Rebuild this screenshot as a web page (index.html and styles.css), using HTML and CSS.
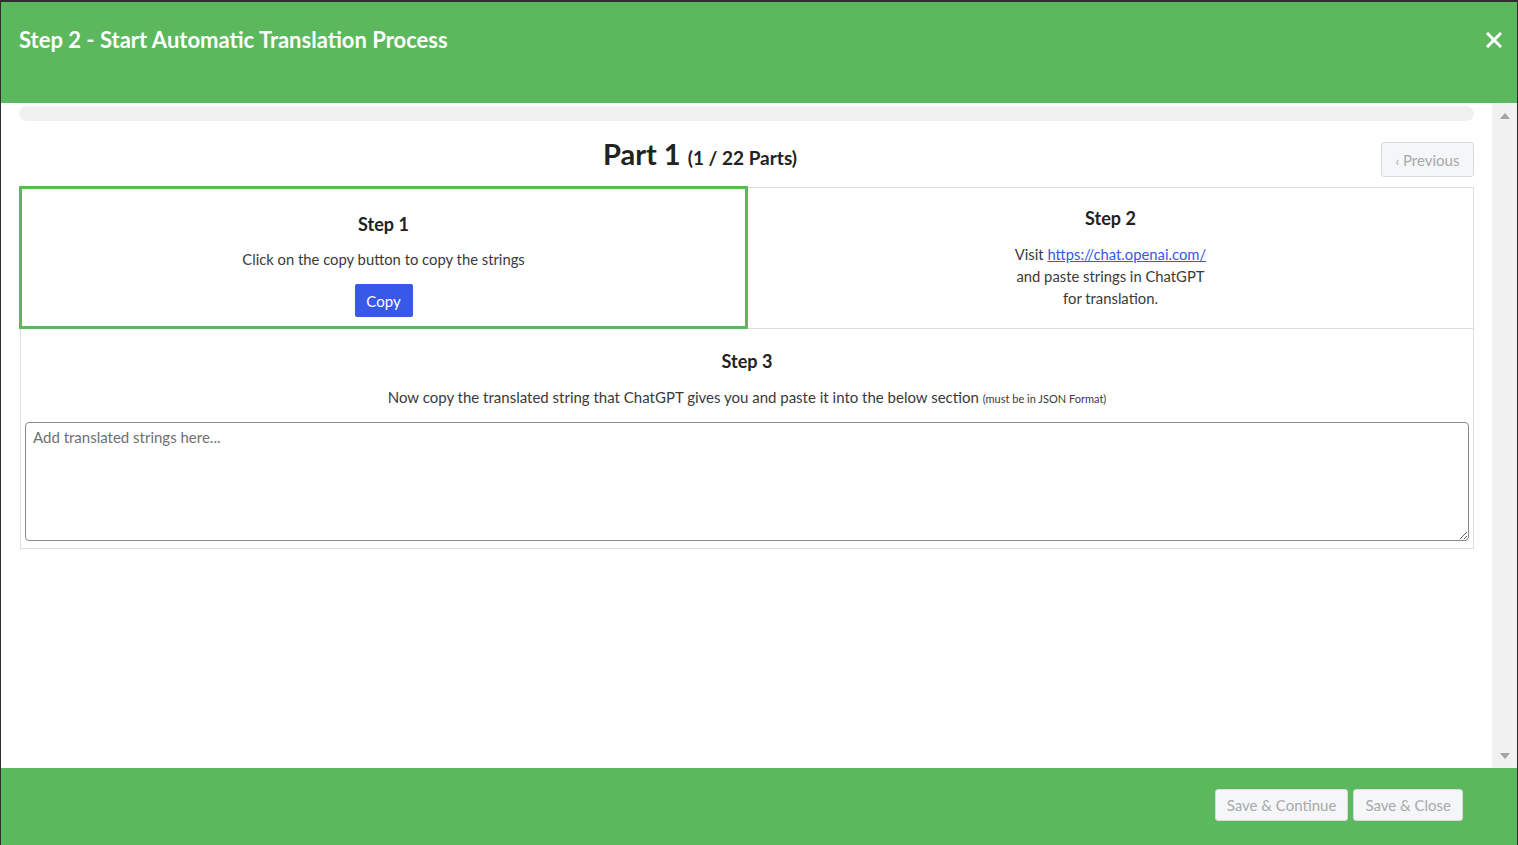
FILE: index.html
```html
<!DOCTYPE html>
<html>
<head>
<meta charset="utf-8">
<link rel="stylesheet" href="styles.css">
</head>
<body>
<div class="modal">
  <header class="modal-header">
    <h1 class="modal-title">Step 2 - Start Automatic Translation Process</h1>
    <button class="close" aria-label="Close">
      <svg width="16" height="16" viewBox="0 0 16 16"><path d="M2 2 L14 14 M14 2 L2 14" stroke="#fff" stroke-width="3" stroke-linecap="square"/></svg>
    </button>
  </header>
  <div class="modal-body">
    <div class="content">
      <div class="progress"></div>
      <div class="part-row">
        <h2 class="part-title">Part 1 <small>(1 / 22 Parts)</small></h2>
        <button class="btn-light prev"><span class="chev">&lsaquo;</span> Previous</button>
      </div>
      <div class="steps">
        <div class="steps-top">
          <div class="step step1">
            <h3 class="step-title">Step 1</h3>
            <p class="step-text">Click on the copy button to copy the strings</p>
            <button class="btn-copy">Copy</button>
          </div>
          <div class="step step2">
            <h3 class="step-title">Step 2</h3>
            <p class="step-text lines">Visit <a href="#">https://chat.openai.com/</a><br>and paste strings in ChatGPT<br>for translation.</p>
          </div>
        </div>
        <div class="step step3">
          <h3 class="step-title">Step 3</h3>
          <p class="step-text">Now copy the translated string that ChatGPT gives you and paste it into the below section <small>(must be in JSON Format)</small></p>
          <textarea class="strings" placeholder="Add translated strings here..."></textarea>
        </div>
      </div>
    </div>
    <div class="scrollbar">
      <span class="arrow up"></span>
      <span class="arrow down"></span>
    </div>
  </div>
  <footer class="modal-footer">
    <button class="btn-light">Save &amp; Continue</button>
    <button class="btn-light">Save &amp; Close</button>
  </footer>
</div>
</body>
</html>
```

FILE: styles.css
```css
html, body {
  margin: 0;
  padding: 0;
  height: 100%;
}
body {
  background: #2e2e2e;
  font-family: Lato, "Noto Sans", "Liberation Sans", sans-serif;
  color: #3a3a3a;
  overflow: hidden;
}
.modal {
  margin: 2px 1px 0 1px;
  height: 843px;
  display: flex;
  flex-direction: column;
  background: #fff;
}
.modal-header {
  height: 101px;
  box-sizing: border-box;
  background: #5cb85c;
  display: flex;
  justify-content: space-between;
  align-items: flex-start;
  padding: 24px 15px 0 18px;
}
.modal-title {
  margin: 0;
  color: #fff;
  font-size: 22px;
  font-weight: 700;
  line-height: 28px;
}
.close {
  background: none;
  border: 0;
  padding: 0;
  margin-top: 6px;
  width: 16px;
  height: 16px;
  display: block;
}
.close svg { display: block; }
.modal-body {
  flex: 1;
  display: flex;
  min-height: 0;
}
.content {
  flex: 1;
  padding: 3px 18px 0 18px;
}
.scrollbar {
  width: 25px;
  background: #f1f1f1;
  display: flex;
  flex-direction: column;
  justify-content: space-between;
  align-items: center;
  padding: 10px 0 9px;
}
.arrow {
  width: 0;
  height: 0;
  border-left: 5px solid transparent;
  border-right: 5px solid transparent;
}
.arrow.up { border-bottom: 6px solid #a3a3a3; }
.arrow.down { border-top: 6px solid #a3a3a3; }
.progress {
  height: 15px;
  border-radius: 8px;
  background: #f1f1f1;
}
.part-row {
  display: flex;
  align-items: flex-start;
  height: 35px;
  margin-top: 21px;
}
.part-title {
  flex: 1;
  margin: -7px 0 0;
  text-align: center;
  font-size: 29px;
  font-weight: 700;
  line-height: 38px;
  color: #222;
}
.part-title small {
  font-size: 19px;
  font-weight: 700;
}
.btn-light {
  font-family: inherit;
  background: #f5f6f7;
  border: 1px solid #d9dadb;
  border-radius: 3px;
  color: #a8a9aa;
  font-size: 15px;
  padding: 0 11px;
  height: 32px;
}
.prev {
  height: 35px;
  width: 93px;
  padding: 0;
}
.chev { font-size: 13px; }
.steps { margin-top: 9px; }
.steps-top {
  display: grid;
  grid-template-columns: 729px 1fr;
}
.step {
  text-align: center;
  box-sizing: border-box;
}
.step-title {
  margin: 0;
  font-size: 18px;
  font-weight: 700;
  line-height: 24px;
  color: #222;
}
.step-text {
  margin: 0;
  font-size: 14.8px;
  line-height: 22px;
  color: #3a3a3a;
}
.step-text small { font-size: 11px; }
.step1 {
  height: 143px;
  border: 3px solid #5cb85c;
  padding-top: 23px;
}
.step1 .step-text { margin-top: 12px; }
.btn-copy {
  margin-top: 14px;
  font-family: inherit;
  background: #3858e9;
  color: #fff;
  border: 0;
  border-radius: 2px;
  font-size: 15px;
  width: 58px;
  height: 33px;
}
.step2 {
  margin-top: 1px;
  height: 142px;
  border: 1px solid #dedede;
  border-left: 0;
  padding-top: 18px;
}
.step2 .step-text { margin-top: 13px; }
a { color: #3858e9; }
.step3 {
  height: 220px;
  margin-left: 1px;
  border: 1px solid #dedede;
  border-top: 0;
  padding: 20px 4px 0;
}
.step3 .step-text { margin-top: 13px; font-size: 15px; }
.strings {
  display: block;
  box-sizing: border-box;
  width: 100%;
  height: 119px;
  margin-top: 12px;
  border: 1px solid #8a8a8a;
  border-radius: 4px;
  padding: 5px 7px;
  font-family: inherit;
  font-size: 15px;
  color: #333;
  resize: vertical;
}
.strings::placeholder { color: #707070; }
.modal-footer {
  height: 77px;
  box-sizing: border-box;
  background: #5cb85c;
  display: flex;
  justify-content: flex-end;
  align-items: flex-start;
  gap: 5px;
  padding: 21px 54px 0 0;
}
```
